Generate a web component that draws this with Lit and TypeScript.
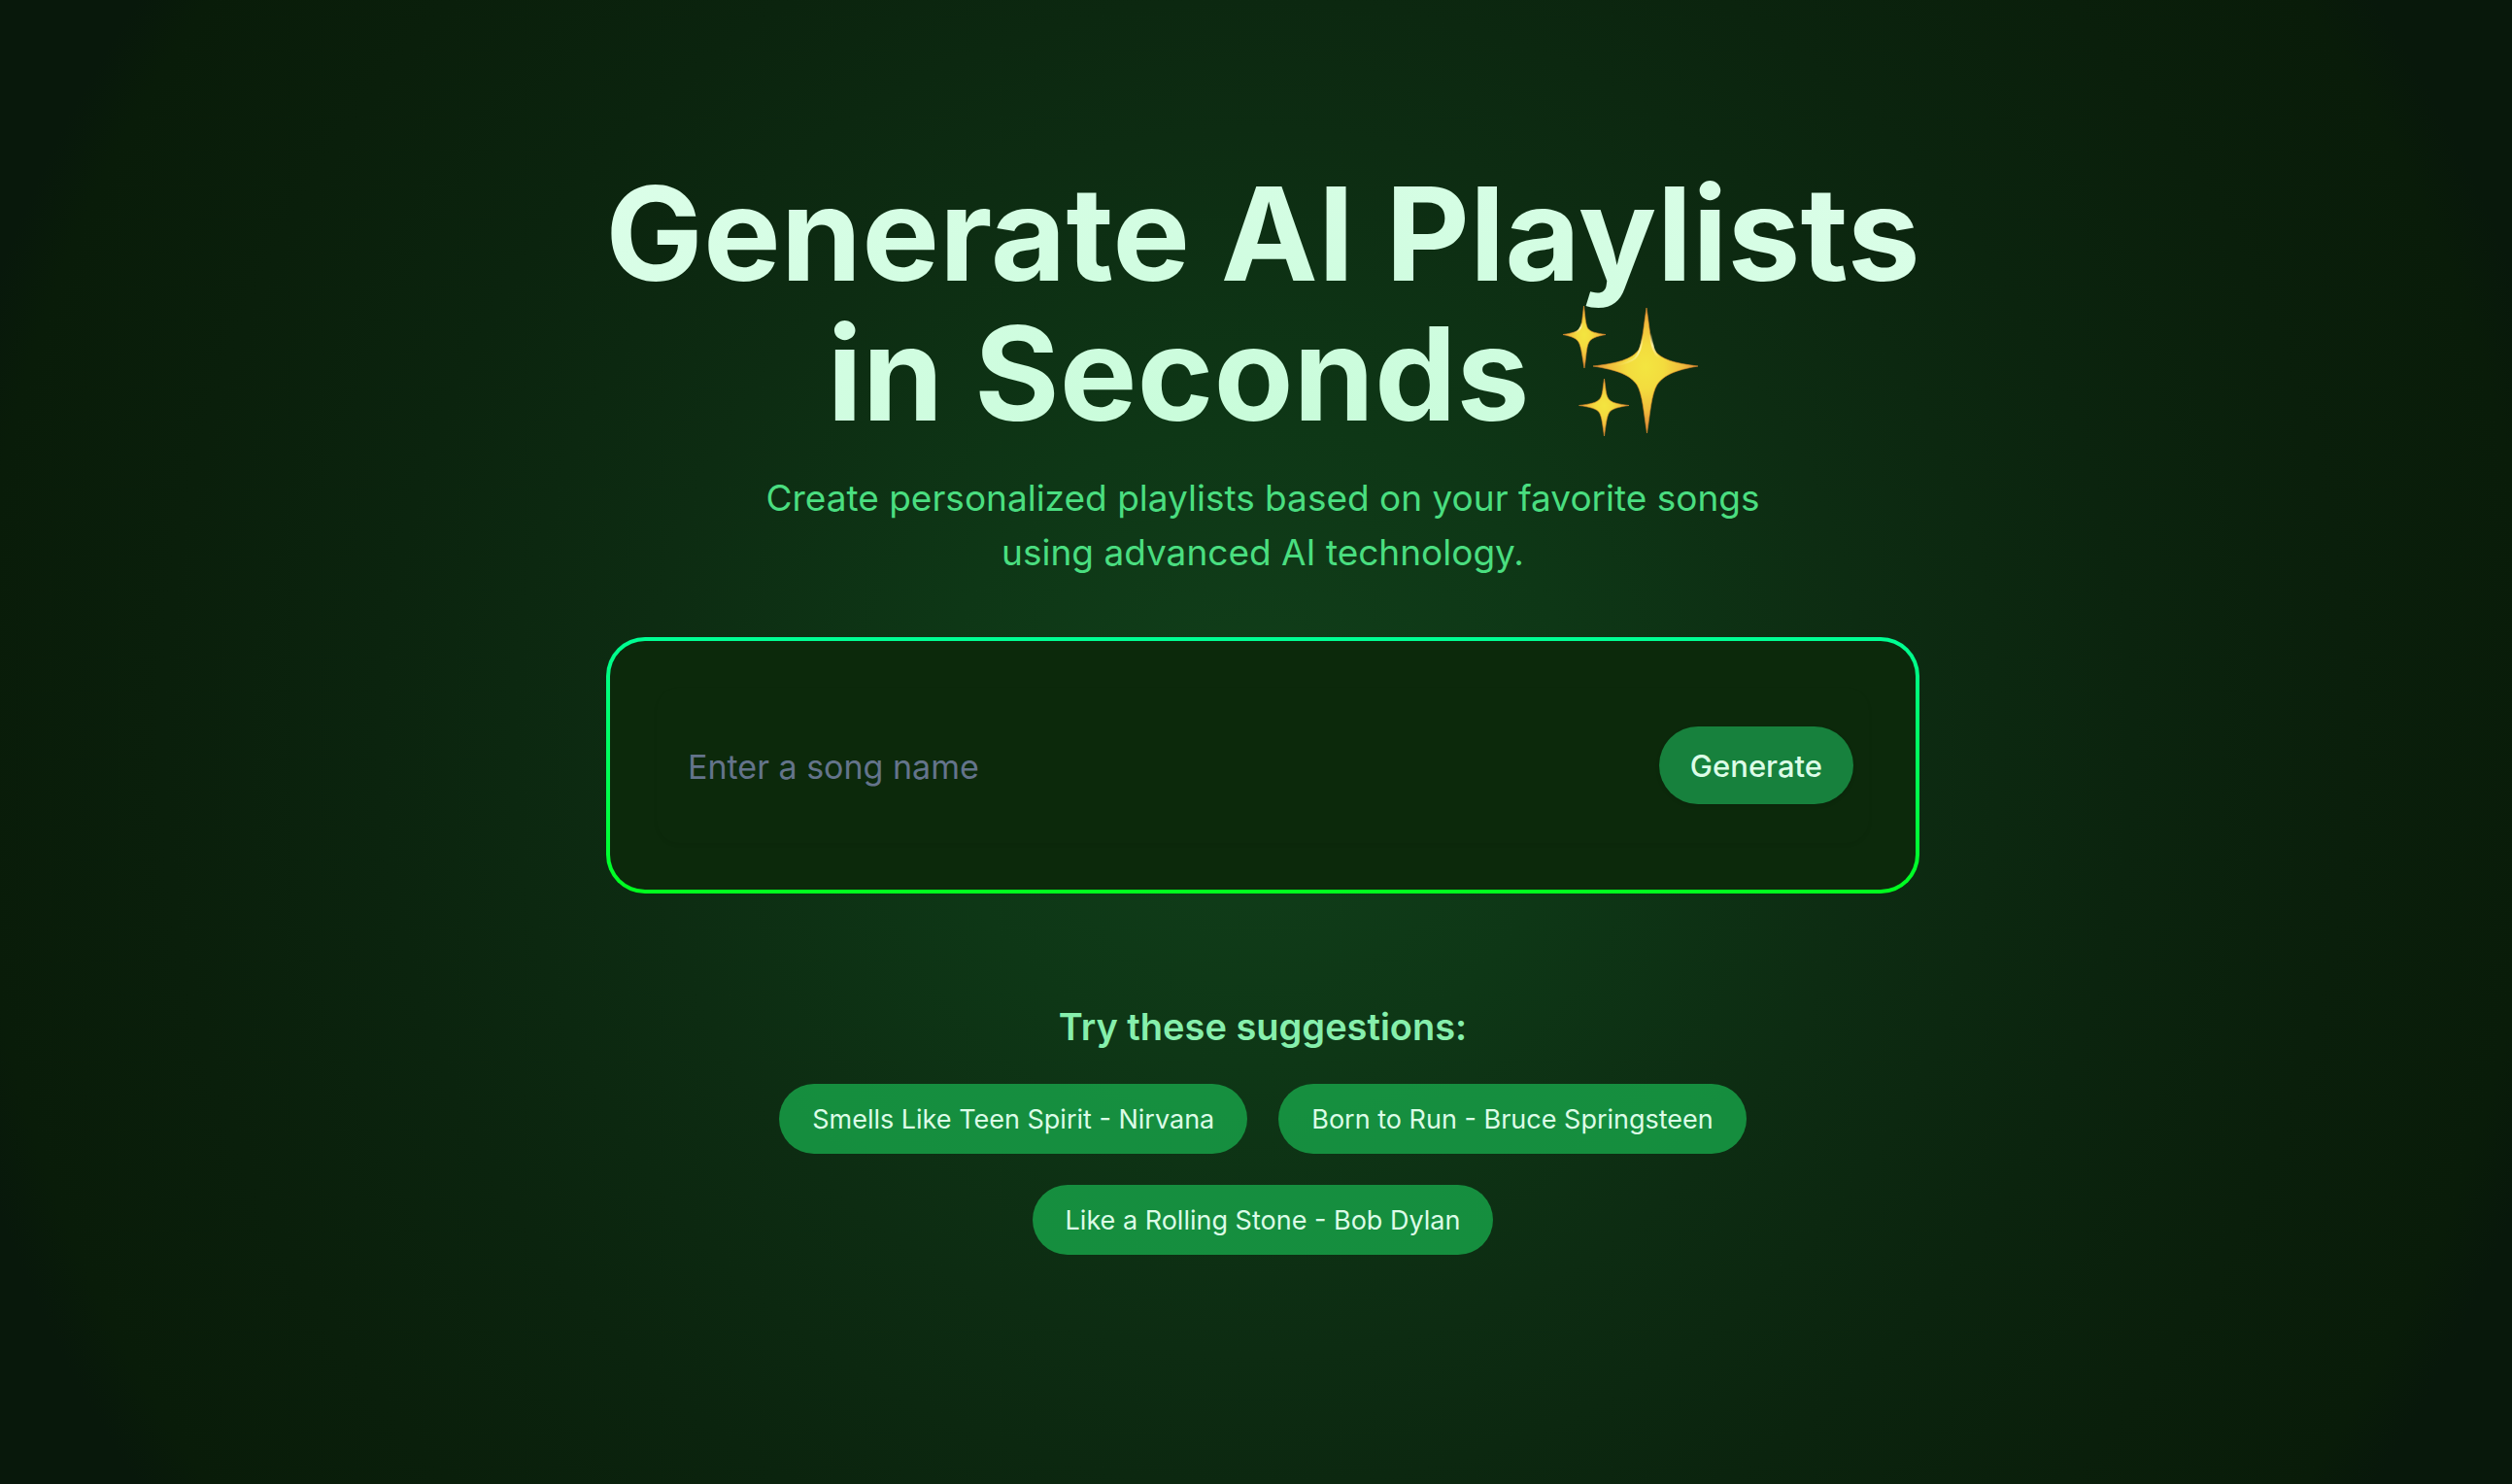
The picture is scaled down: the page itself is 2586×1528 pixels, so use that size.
import { LitElement, html, css, svg } from "lit";
import { customElement, state } from "lit/decorators.js";

const SUGGESTIONS = [
  "Smells Like Teen Spirit - Nirvana",
  "Born to Run - Bruce Springsteen",
  "Like a Rolling Stone - Bob Dylan",
];

/* Three four-pointed stars; the shapes share one fill and one warm rim. */
const STARS = [
  "M90 5C93 24 94 40 98 48C104 58 119 62 143 65C120 69 108 74 101 84C95 94 94 112 90.500 134C87 112 86 94 80 84C73 74 60 69 35 65C60 62 75 58 82 48C86 40 87 24 90 5Z",
  "M25.500 3C27 14 27 21 29.500 26C32.500 30 38 31 48 32.500C38 34.500 33 36 30.500 41C28 46 28 56 26 67C24 56 23 46 20.500 41C18 36 13 34.500 4 32.500C13 31 18.500 30 21.500 26C24 21 24 14 25.500 3Z",
  "M46.500 78C48 87 48 94 50.500 98C53.500 103 61 104 72 105.500C61 107 54 109 51.500 113C49 117 48 127 46.500 137C45 127 44 117 41.500 113C39 109 32 107 20.500 105.500C32 104 39 103 42.500 98C45 94 45 87 46.500 78Z",
];

@customElement("sparkles-icon")
export class SparklesIcon extends LitElement {
  static styles = css`
    :host {
      display: inline-block;
      line-height: 0;
    }
    .art {
      display: block;
      width: 144px;
      height: 144px;
    }
  `;

  render() {
    return html`<svg class="art" viewBox="0 0 144 144" role="img" aria-label="Sparkles">
      <defs>
        <radialGradient id="fill" cx="0.5" cy="0.47" r="0.5">
          <stop offset="0" stop-color="#f3e540"></stop>
          <stop offset="0.35" stop-color="#f3dc3e"></stop>
          <stop offset="0.7" stop-color="#f0bd3c"></stop>
          <stop offset="1" stop-color="#dd8a3c"></stop>
        </radialGradient>
        <linearGradient id="shine" x1="0" y1="0" x2="0" y2="1">
          <stop offset="0" stop-color="#fff6b0" stop-opacity="0"></stop>
          <stop offset="0.5" stop-color="#fff6b0" stop-opacity="0.9"></stop>
          <stop offset="1" stop-color="#fff6b0" stop-opacity="0"></stop>
        </linearGradient>
      </defs>
      ${STARS.map(
        (d) => svg`<path d=${d} fill="url(#fill)" stroke="#e08a2c" stroke-width="1" stroke-opacity="0.6" stroke-linejoin="round"></path>`,
      )}
      <path d="M94 31C95 42 97 51 103 57" fill="none" stroke="url(#shine)" stroke-width="2.500" stroke-linecap="round"></path>
      <path d="M86 34C85 45 83 52 78 57C73 61 66 63 58 65" fill="none" stroke="url(#shine)" stroke-width="2" stroke-linecap="round"></path>
      <path d="M23.500 20C23 26 20 30 14 31.500" fill="none" stroke="url(#shine)" stroke-width="2" stroke-linecap="round"></path>
    </svg>`;
  }
}

@customElement("app-root")
export class AppRoot extends LitElement {
  @state() private song = "";

  static styles = css`
    :host {
      display: block;
      font-family: Inter, "Liberation Sans", sans-serif;
    }
    * {
      box-sizing: border-box;
    }
    .page {
      min-height: 100vh;
      padding: 168px 24px 48px 38px;
      display: flex;
      flex-direction: column;
      align-items: center;
      background: radial-gradient(
        circle farthest-corner at 50% 50%,
        #113f1a 0%,
        #0e3716 22%,
        #0d2c12 42%,
        #0b240e 60%,
        #0a1f0b 75%,
        #091c09 88%,
        #08180b 92%
      );
    }
    .content {
      width: 100%;
      max-width: 1352px;
      display: flex;
      flex-direction: column;
      align-items: center;
      text-align: center;
    }
    .title {
      width: 100%;
      margin: 0;
      display: flex;
      flex-direction: column;
      align-items: center;
      font-size: 134px;
      line-height: 144px;
      font-weight: 700;
      white-space: nowrap;
      color: transparent;
      background: radial-gradient(ellipse farthest-corner at 50% 110%, #c6fcd8, #d1fde1 50%, #dcfee9);
      -webkit-background-clip: text;
      background-clip: text;
    }
    .line {
      display: flex;
      align-items: center;
      gap: 30px;
      height: 144px;
    }
    .lead {
      margin: 29px 0 0;
      max-width: 1100px;
      font-size: 37px;
      line-height: 56px;
      color: #4ade80;
    }
    .card {
      width: 100%;
      margin-top: 59px;
      padding: 48px;
      border: 4px solid transparent;
      border-radius: 40px;
      background:
        linear-gradient(#0c290b, #0c290b) padding-box,
        linear-gradient(#00ff95, #00ff1e) border-box;
    }
    .form {
      height: 160px;
      padding: 0 16px 0 32px;
      display: flex;
      align-items: center;
      gap: 32px;
      border-radius: 24px;
      box-shadow: 0 2px 4px rgba(0, 0, 0, 0.06);
    }
    .field {
      flex: 1;
      min-width: 0;
      height: 80px;
      padding: 2px 0 0;
      border: 0;
      outline: 0;
      background: transparent;
      font: inherit;
      font-size: 34px;
      color: #dcfce7;
    }
    .field::placeholder {
      color: #64748b;
      opacity: 1;
    }
    .submit {
      height: 80px;
      padding: 0 32px;
      border: 0;
      border-radius: 40px;
      background: #17813d;
      box-shadow: 0 2px 4px rgba(0, 0, 0, 0.1);
      color: #dcfce7;
      font: inherit;
      font-size: 31px;
      font-weight: 500;
      cursor: pointer;
    }
    .subtitle {
      margin: 109px 0 0;
      font-size: 38px;
      line-height: 56px;
      font-weight: 600;
      color: #86efac;
    }
    .chips {
      margin: 31px 0 0;
      padding: 0;
      max-width: 1100px;
      display: flex;
      flex-wrap: wrap;
      justify-content: center;
      gap: 32px;
      list-style: none;
    }
    .chip {
      display: block;
      height: 72px;
      padding: 0 34px;
      border: 0;
      border-radius: 36px;
      background: rgba(24, 159, 70, 0.85);
      color: #dcfce7;
      font: inherit;
      font-size: 27px;
      cursor: pointer;
    }
  `;

  private onInput(e: Event) {
    this.song = (e.target as HTMLInputElement).value;
  }

  render() {
    return html`<main class="page">
      <div class="content">
        <h1 class="title">
          <span class="line">Generate AI Playlists</span>
          <span class="line">in Seconds<sparkles-icon></sparkles-icon></span>
        </h1>
        <p class="lead">Create personalized playlists based on your favorite songs using advanced AI technology.</p>
        <section class="card">
          <form class="form" @submit=${(e: Event) => e.preventDefault()}>
            <input
              class="field"
              type="text"
              aria-label="Song name"
              placeholder="Enter a song name"
              .value=${this.song}
              @input=${this.onInput}
            />
            <button class="submit" type="submit">Generate</button>
          </form>
        </section>
        <h2 class="subtitle">Try these suggestions:</h2>
        <ul class="chips">
          ${SUGGESTIONS.map(
            (s) => html`<li><button class="chip" type="button" @click=${() => (this.song = s)}>${s}</button></li>`,
          )}
        </ul>
      </div>
    </main>`;
  }
}
